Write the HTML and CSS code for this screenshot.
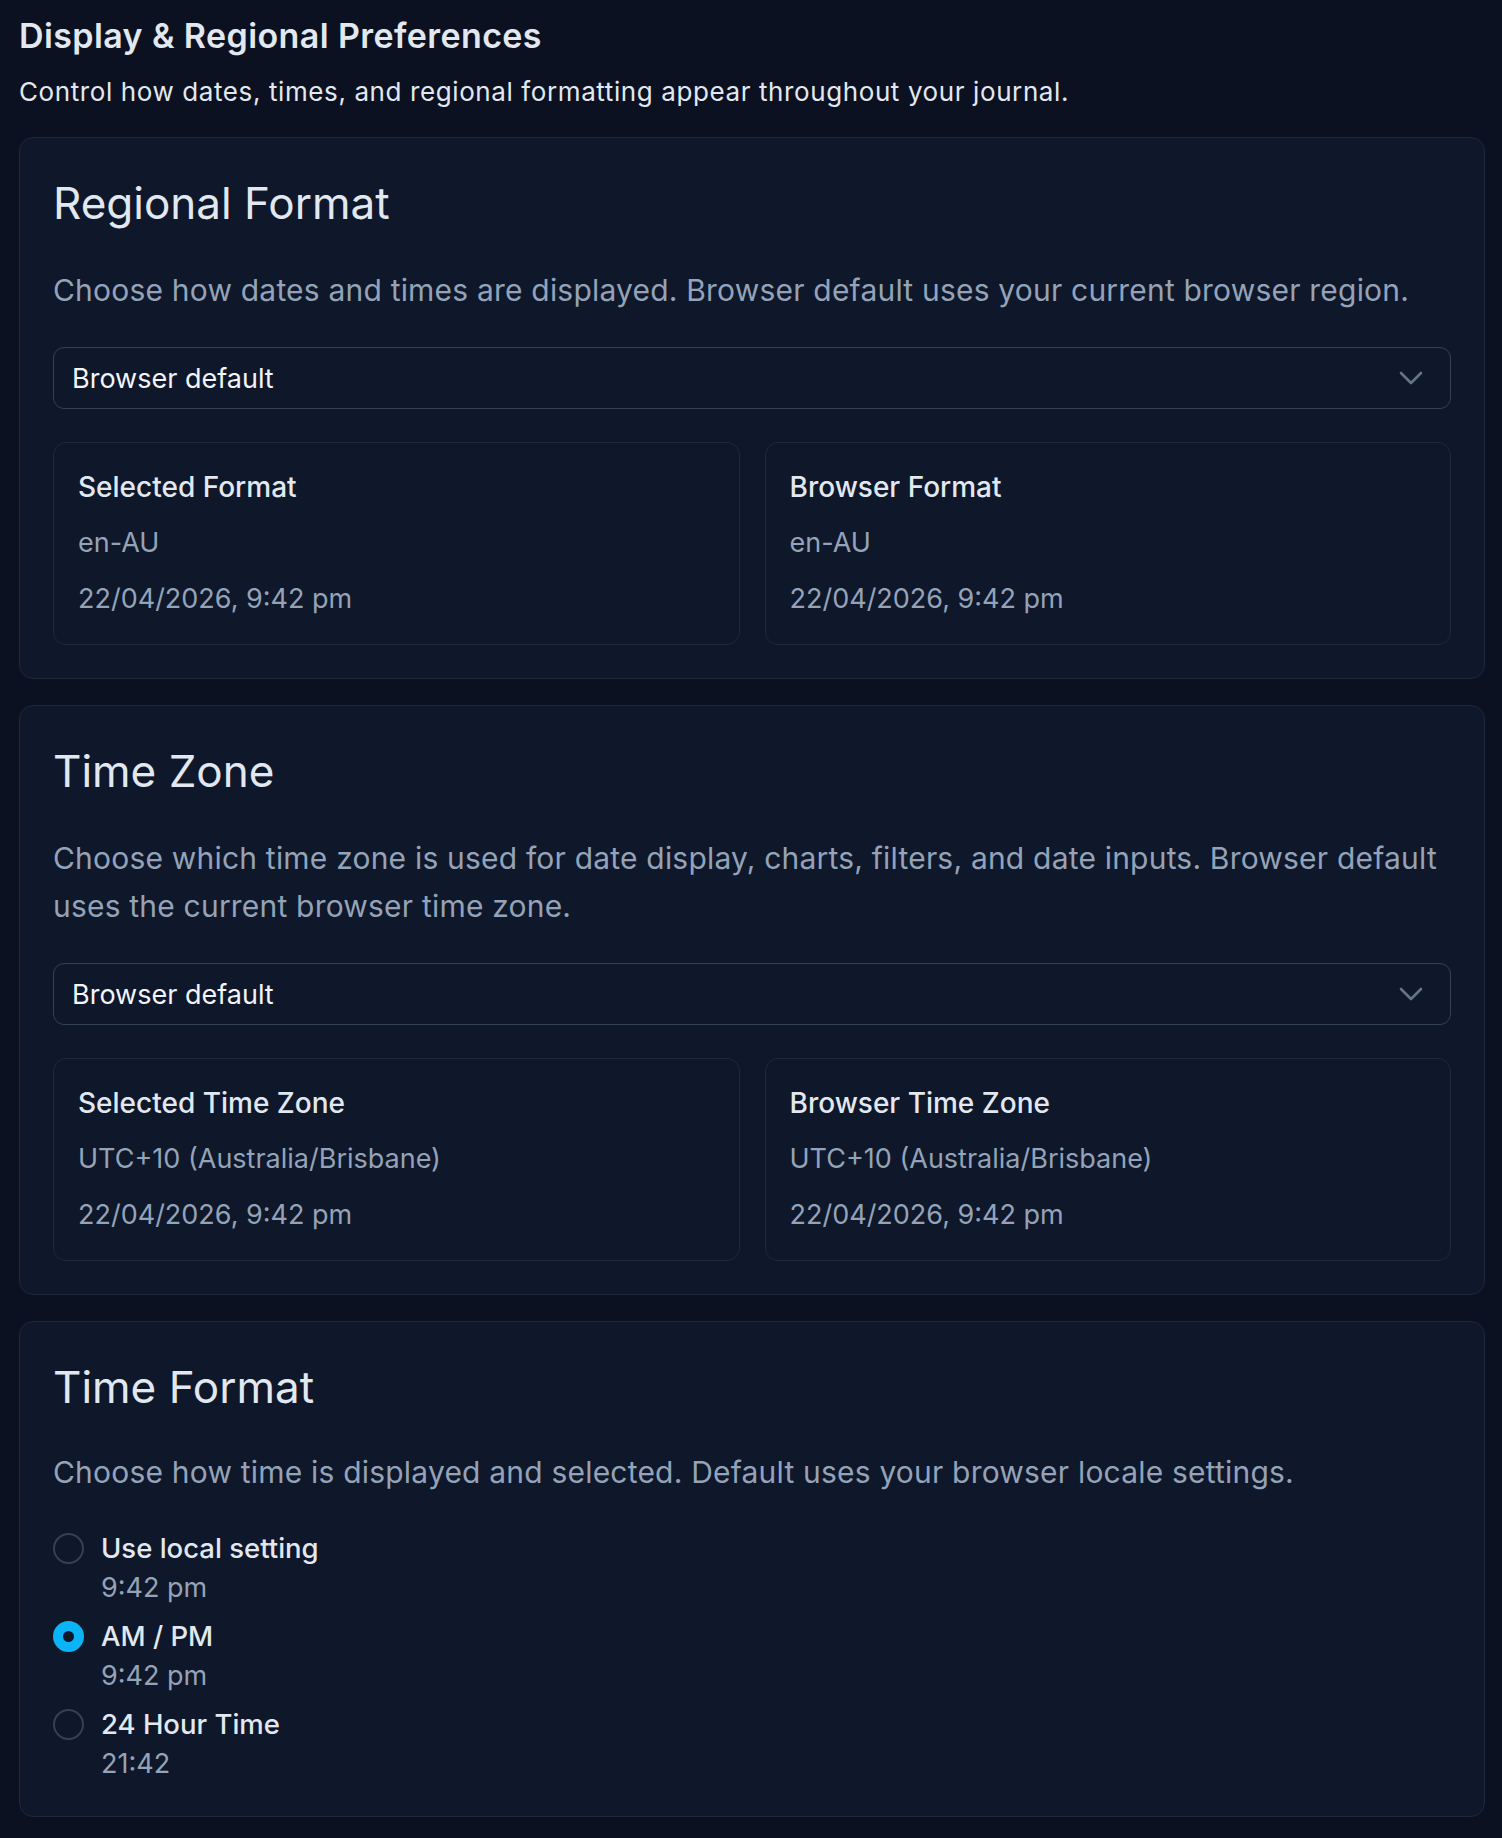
FILE: index.html
```html
<!DOCTYPE html>
<html lang="en">
<head>
<meta charset="utf-8">
<title>Display &amp; Regional Preferences</title>
<link rel="stylesheet" href="styles.css">
</head>
<body>
<main class="page">
  <header class="header">
    <h1 class="header-title">Display &amp; Regional Preferences</h1>
    <p class="header-sub">Control how dates, times, and regional formatting appear throughout your journal.</p>
  </header>

  <section class="card">
    <h2 class="card-title">Regional Format</h2>
    <p class="card-desc">Choose how dates and times are displayed. Browser default uses your current browser region.</p>
    <div class="select">
      <span class="select-value">Browser default</span>
      <svg class="chevron" width="24" height="14" viewBox="0 0 24 14"><path d="M2 2 L12 12 L22 2" fill="none" stroke="#64748b" stroke-width="2.6" stroke-linecap="round" stroke-linejoin="round"/></svg>
    </div>
    <div class="info-grid">
      <div class="info">
        <div class="info-title">Selected Format</div>
        <div class="info-value">en-AU</div>
        <div class="info-value">22/04/2026, 9:42 pm</div>
      </div>
      <div class="info">
        <div class="info-title">Browser Format</div>
        <div class="info-value">en-AU</div>
        <div class="info-value">22/04/2026, 9:42 pm</div>
      </div>
    </div>
  </section>

  <section class="card">
    <h2 class="card-title">Time Zone</h2>
    <p class="card-desc">Choose which time zone is used for date display, charts, filters, and date inputs. Browser default uses the current browser time zone.</p>
    <div class="select">
      <span class="select-value">Browser default</span>
      <svg class="chevron" width="24" height="14" viewBox="0 0 24 14"><path d="M2 2 L12 12 L22 2" fill="none" stroke="#64748b" stroke-width="2.6" stroke-linecap="round" stroke-linejoin="round"/></svg>
    </div>
    <div class="info-grid">
      <div class="info">
        <div class="info-title">Selected Time Zone</div>
        <div class="info-value">UTC+10 (Australia/Brisbane)</div>
        <div class="info-value">22/04/2026, 9:42 pm</div>
      </div>
      <div class="info">
        <div class="info-title">Browser Time Zone</div>
        <div class="info-value">UTC+10 (Australia/Brisbane)</div>
        <div class="info-value">22/04/2026, 9:42 pm</div>
      </div>
    </div>
  </section>

  <section class="card card-radios">
    <h2 class="card-title">Time Format</h2>
    <p class="card-desc">Choose how time is displayed and selected. Default uses your browser locale settings.</p>
    <div class="radios">
      <div class="radio">
        <span class="radio-dot"></span>
        <div class="radio-text">
          <div class="radio-label">Use local setting</div>
          <div class="radio-sub">9:42 pm</div>
        </div>
      </div>
      <div class="radio">
        <span class="radio-dot is-checked"></span>
        <div class="radio-text">
          <div class="radio-label">AM / PM</div>
          <div class="radio-sub">9:42 pm</div>
        </div>
      </div>
      <div class="radio">
        <span class="radio-dot"></span>
        <div class="radio-text">
          <div class="radio-label">24 Hour Time</div>
          <div class="radio-sub">21:42</div>
        </div>
      </div>
    </div>
  </section>
</main>
</body>
</html>
```

FILE: styles.css
```css
* { box-sizing: border-box; }

html, body {
  margin: 0;
  background: #0b1120;
}

body {
  font-family: Inter, "Noto Sans", "Liberation Sans", sans-serif;
  color: #e2e8f0;
}

.page {
  display: flex;
  flex-direction: column;
  gap: 26px;
  padding: 10px 17px 19px 19px;
}

.header {
  display: flex;
  flex-direction: column;
  gap: 11px;
}

.header-title {
  margin: 0;
  font-size: 34px;
  line-height: 52px;
  font-weight: 600;
  letter-spacing: 0.4px;
  color: #e2e8f0;
}

.header-sub {
  margin: 0;
  font-size: 26px;
  line-height: 38px;
  letter-spacing: 0.6px;
  color: #e2e8f0;
}

.card {
  display: flex;
  flex-direction: column;
  gap: 33px;
  padding: 35px 33px 33px;
  background: #0f172a;
  border: 1px solid #1e293b;
  border-radius: 14px;
}

.card-radios {
  gap: 31px;
}

.card-title {
  margin: 0;
  font-size: 44px;
  line-height: 60px;
  font-weight: 400;
  color: #e2e8f0;
}

.card-desc {
  margin: 0;
  font-size: 30px;
  line-height: 48px;
  letter-spacing: 0.2px;
  color: #94a3b8;
}

.select {
  display: flex;
  align-items: center;
  justify-content: space-between;
  height: 62px;
  padding: 0 27px 0 18px;
  border: 1px solid #334155;
  border-radius: 11px;
  background: #0f172a;
}

.select-value {
  font-size: 27px;
  color: #f1f5f9;
}

.chevron { display: block; }

.info-grid {
  display: grid;
  grid-template-columns: 1fr 1fr;
  gap: 25px;
}

.info {
  display: flex;
  flex-direction: column;
  gap: 14px;
  padding: 23px 24px 24px;
  border: 1px solid #1e293b;
  border-radius: 13px;
}

.info-title {
  font-size: 28px;
  line-height: 42px;
  font-weight: 500;
  color: #e2e8f0;
}

.info-value {
  font-size: 27px;
  line-height: 42px;
  color: #94a3b8;
}

.radios {
  display: flex;
  flex-direction: column;
  gap: 8.5px;
}

.radio {
  display: flex;
  align-items: flex-start;
  gap: 17px;
}

.radio-dot {
  flex: none;
  width: 31px;
  height: 31px;
  margin-top: 5.5px;
  border: 2px solid #334155;
  border-radius: 50%;
}

.radio-dot.is-checked {
  border: 10px solid #0ab4f7;
  background: #0f172a;
}

.radio-label {
  font-size: 27.5px;
  line-height: 42px;
  font-weight: 500;
  color: #e2e8f0;
}

.radio-sub {
  font-size: 27px;
  line-height: 37.5px;
  color: #94a3b8;
}
```
